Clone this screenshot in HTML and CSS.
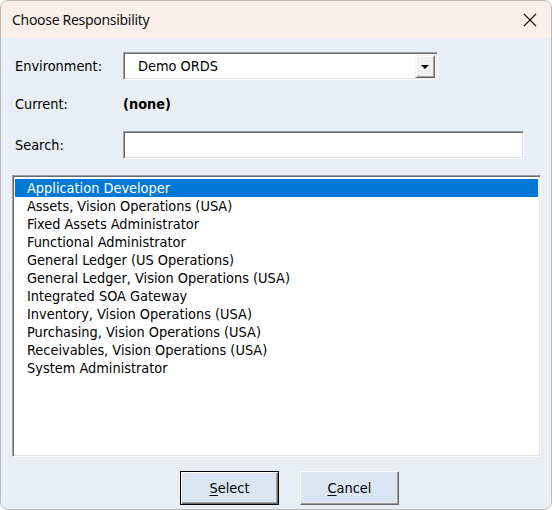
FILE: index.html
```html
<!DOCTYPE html>
<html lang="en">
<head>
<meta charset="utf-8">
<title>Choose Responsibility</title>
<link rel="stylesheet" href="styles.css">
</head>
<body>
<div class="window">
  <div class="titlebar">
    <span class="title">Choose Responsibility</span>
    <svg class="close" width="14" height="14" viewBox="0 0 14 14">
      <path d="M1 1 L13 13 M13 1 L1 13" stroke="#1a1a1a" stroke-width="1.2" fill="none"/>
    </svg>
  </div>
  <div class="content">
    <div class="field env-row">
      <span class="label">Environment:</span>
      <div class="combo sunken">
        <span class="combo-text">Demo ORDS</span>
        <span class="combo-btn"><span class="arrow"></span></span>
      </div>
    </div>
    <div class="field current-row">
      <span class="label">Current:</span>
      <span class="value">(none)</span>
    </div>
    <div class="field search-row">
      <span class="label">Search:</span>
      <div class="search sunken"></div>
    </div>
    <ul class="list sunken">
      <li class="selected">Application Developer</li>
      <li>Assets, Vision Operations (USA)</li>
      <li>Fixed Assets Administrator</li>
      <li>Functional Administrator</li>
      <li>General Ledger (US Operations)</li>
      <li>General Ledger, Vision Operations (USA)</li>
      <li>Integrated SOA Gateway</li>
      <li>Inventory, Vision Operations (USA)</li>
      <li>Purchasing, Vision Operations (USA)</li>
      <li>Receivables, Vision Operations (USA)</li>
      <li>System Administrator</li>
    </ul>
    <div class="buttons">
      <button class="btn default"><span class="inner"><u>S</u>elect</span></button>
      <button class="btn"><span class="inner"><u>C</u>ancel</span></button>
    </div>
  </div>
</div>
</body>
</html>
```
FILE: styles.css
```css
html, body {
  margin: 0;
  padding: 0;
  background: #ffffff;
}

.window {
  width: 552px;
  height: 510px;
  box-sizing: border-box;
  border: 1px solid #b9b9b9;
  border-radius: 8px;
  overflow: hidden;
  background: #e9eef5;
  display: flex;
  flex-direction: column;
}

.titlebar {
  height: 37px;
  background: #f9f0ec;
  display: flex;
  align-items: center;
  justify-content: space-between;
  padding: 0 14px 0 11px;
  flex-shrink: 0;
}

.title {
  font-family: "Noto Sans", "Open Sans", sans-serif;
  font-size: 14px;
  color: #111;
  letter-spacing: -0.3px;
}

.close {
  display: block;
  margin-top: 1px;
}

.content {
  flex: 1;
  padding: 14px 0 0 11px;
  font-family: "DejaVu Sans Condensed", "DejaVu Sans", sans-serif;
  font-size: 14.4px;
  color: #000;
  display: flex;
  flex-direction: column;
}

.field {
  display: flex;
  align-items: center;
}

.label {
  width: 111px;
  padding-left: 3px;
  box-sizing: border-box;
}

.sunken {
  box-sizing: border-box;
  border: 1px solid;
  border-color: #a0a0a0 #ffffff #ffffff #a0a0a0;
  box-shadow: inset 1px 1px 0 #696969, inset -1px -1px 0 #e3e3e3;
  background: #fff;
}

.env-row { height: 28px; }

.combo {
  width: 315px;
  height: 28px;
  display: flex;
  align-items: center;
  justify-content: space-between;
  padding: 2px;
}

.combo-text {
  padding-left: 12px;
}

.combo-btn {
  width: 20px;
  height: 23px;
  box-sizing: border-box;
  background: #f0f0f0;
  border: 1px solid;
  border-color: #f0f0f0 #696969 #696969 #f0f0f0;
  box-shadow: inset 1px 1px 0 #fff, inset -1px -1px 0 #a0a0a0;
  display: flex;
  align-items: center;
  justify-content: center;
}

.arrow {
  width: 0;
  height: 0;
  border-left: 4px solid transparent;
  border-right: 4px solid transparent;
  border-top: 4px solid #000;
  margin-top: 2px;
}

.current-row {
  height: 28px;
  margin-top: 10px;
}

.value {
  font-weight: bold;
}

.search-row {
  margin-top: 13px;
}

.search {
  width: 401px;
  height: 28px;
}

.list {
  list-style: none;
  margin: 16px 0 0 0;
  width: 529px;
  height: 282px;
  padding: 3px 2px 2px 2px;
}

.list li {
  height: 18px;
  line-height: 18px;
  padding-left: 12px;
  white-space: nowrap;
}

.list li.selected {
  background: #0078d7;
  color: #fff;
}

.buttons {
  display: flex;
  gap: 21px;
  padding-left: 168px;
  margin-top: 14px;
}

.btn {
  width: 99px;
  height: 34px;
  padding: 0;
  margin: 0;
  font: inherit;
  color: #000;
  background: #dae6f2;
  box-sizing: border-box;
  border: 1px solid;
  border-color: #ffffff #696969 #696969 #ffffff;
  box-shadow: inset -1px -1px 0 #a0a0a0;
  display: flex;
  align-items: center;
  justify-content: center;
}

.btn.default {
  border: 1px solid #000;
  box-shadow: inset 1px 1px 0 #fff, inset -1px -1px 0 #696969, inset -2px -2px 0 #a0a0a0;
}

.btn u {
  text-underline-offset: 2px;
}
```
